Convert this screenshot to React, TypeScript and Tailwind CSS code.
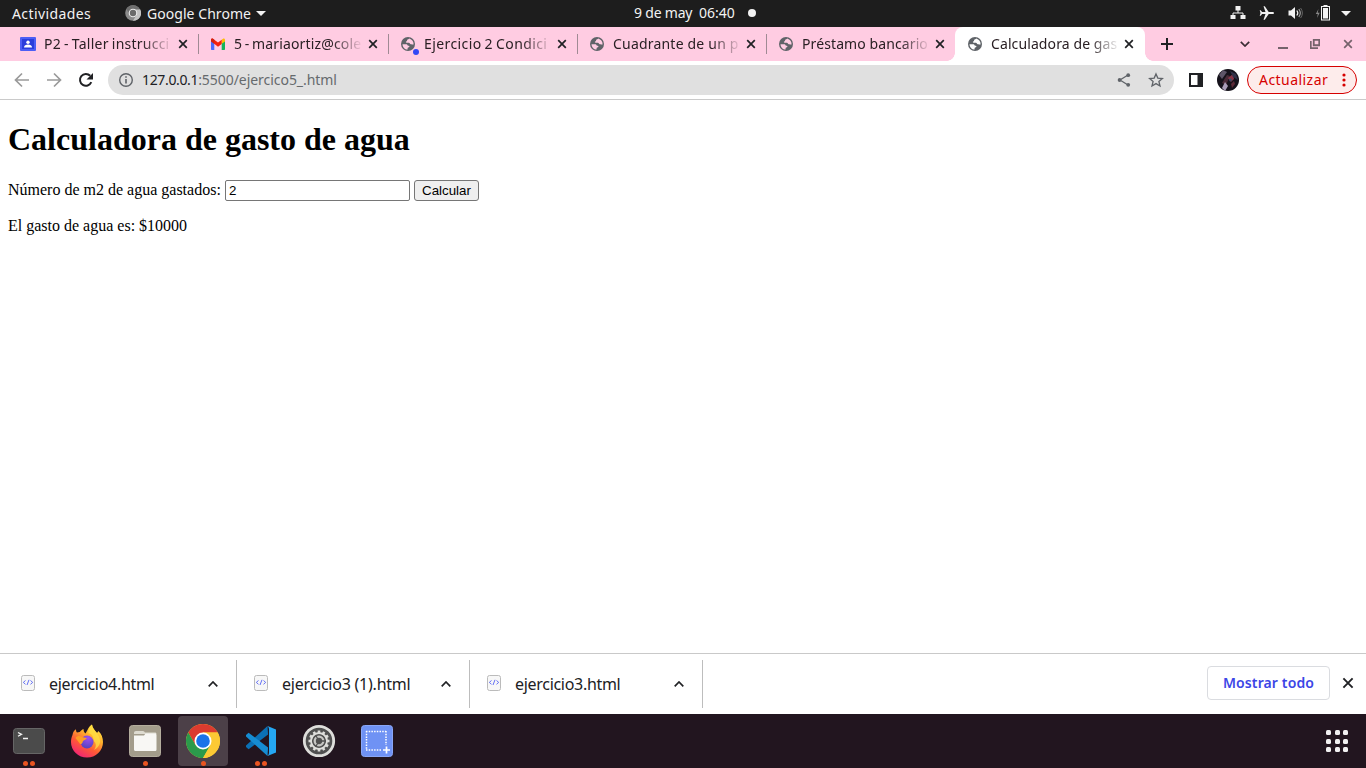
import type { ReactNode } from "react";

const UI = "font-['Noto_Sans','Open_Sans',sans-serif]";

function Cross({ color = "#202124" }: { color?: string }) {
  return (
    <svg className="h-[10px] w-[10px] shrink-0" viewBox="0 0 10 10">
      <path d="M1.200 1.200l7.600 7.600M8.800 1.200l-7.600 7.600" stroke={color} strokeWidth="1.700" />
    </svg>
  );
}

function Globe() {
  return (
    <svg className="h-4 w-4" viewBox="0 0 16 16">
      <circle cx="8" cy="8" r="7" fill="#5f6368" />
      <path
        d="M9.200 2.500c-.3 1-1.800.7-2 1.600-.2.800-.2 1.200-1 1.500-.6.300-.3 1.200.5 1.200h2.200c1 0 1 1.300 1.900 1.500.9.200 1.500.1 2.800.1.2-2.700-1.500-5-4.400-5.900z"
        fill="currentColor"
      />
      <path d="M2.500 8.200h3.300c1.300 0 2 .7 2 1.500h1.100c.7 0 .7 1.500-.1 1.600-1 .1-1.200.6-1.200 1.300v1c-2.800-.1-5-2.400-5.100-5.400z" fill="currentColor" />
    </svg>
  );
}

function Classroom() {
  return (
    <svg className="h-4 w-4" viewBox="0 0 16 16">
      <rect y="1" width="16" height="14" rx="1" fill="#4c5ef5" />
      <rect x="2" y="3" width="12" height="10" fill="#2b3edb" />
      <circle cx="8" cy="6.200" r="1.700" fill="#fff" />
      <path d="M4 11.500c0-2 2-2.900 4-2.900s4 .9 4 2.900z" fill="#fff" />
    </svg>
  );
}

function Gmail() {
  return (
    <svg className="h-4 w-4" viewBox="0 0 16 16">
      <path d="M1 4v9c0 .6.4 1 1 1h2.300V6.500z" fill="#4a6bfa" />
      <path d="M15 4v9c0 .6-.4 1-1 1h-2.300V6.500z" fill="#12b35a" />
      <path d="M11.700 3.700L13 2.700c1-.6 2 0 2 1.200v1.500l-3.300 2.400z" fill="#fbbc04" />
      <path d="M1 5.300V3.900c0-1.200 1-1.800 2-1.200l5 3.800 3.700-2.800v4.200L8 10.700z" fill="#f5200c" />
      <path d="M1 5.300V3.900c0-1.200 1-1.800 2-1.200l1.300 1v4.100z" fill="#d2200f" />
    </svg>
  );
}

type TabProps = { icon: ReactNode; width: string; text: string; title: string; active?: boolean; divider?: boolean; dot?: boolean };

function Tab({ icon, width, text, title, active, divider, dot }: TabProps) {
  return (
    <div className={`relative flex h-[34px] shrink-0 items-center pl-3 ${width} ${active ? "rounded-t-lg bg-white text-white" : "text-[#ffcce2]"}`}>
      <span className="relative">
        {icon}
        {dot && <span className="absolute top-[13px] left-[13px] h-1.5 w-1.5 rounded-full bg-[#3348f5]" />}
      </span>
      <span
        className={`ml-2 text-[14px] leading-5 whitespace-nowrap text-[#2a2024] [mask-image:linear-gradient(to_right,black_98px,transparent_129px)] ${text}`}
      >
        {title}
      </span>
      <span className="ml-[6px] flex">
        <Cross />
      </span>
      {divider && <span className="absolute top-[7px] -right-px h-5 w-px bg-[#a08a94]" />}
      {active && (
        <>
          <span className="absolute bottom-0 -left-2 h-2 w-2 bg-[radial-gradient(circle_at_0_0,#ffcce2_7.5px,#fff_8px)]" />
          <span className="absolute -right-2 bottom-0 h-2 w-2 bg-[radial-gradient(circle_at_100%_0,#ffcce2_7.5px,#fff_8px)]" />
        </>
      )}
    </div>
  );
}

function TopBar() {
  return (
    <header className="grid h-[27px] grid-cols-[634px_122px_1fr] items-center bg-[#1d1d1d] text-[14px] leading-[27px] text-[#f2f2f2]">
      <div className="flex items-center pl-3">
        <span className="w-[113px] tracking-[0.4px]">Actividades</span>
        <svg className="h-4 w-4 -translate-y-px" viewBox="0 0 16 16">
          <circle cx="8" cy="8" r="7.800" fill="#8b8b8b" />
          <path d="M8 4h7A7.800 7.800 0 0 1 8 15.800L11.500 10z" fill="#c4c4c4" />
          <path d="M1.300 4A7.800 7.800 0 0 1 15 4.500H8A4 4 0 0 0 4.500 9z" fill="#6f6f6f" />
          <circle cx="8" cy="8" r="4.300" fill="#eee" />
          <circle cx="8" cy="8" r="3.200" fill="#6b6b6b" />
        </svg>
        <span className="ml-[6px] tracking-[0.05px]">Google Chrome</span>
        <svg className="ml-[5px] h-[5px] w-[10px]" viewBox="0 0 10 5">
          <path d="M0 0h10L5 5z" fill="#f2f2f2" />
        </svg>
      </div>
      <div className="flex -translate-y-px items-center whitespace-nowrap">
        <span className="w-[65px] shrink-0 tracking-[-0.2px]">9 de may</span>
        <span className="w-[49px] shrink-0">06:40</span>
        <span className="h-2 w-2 shrink-0 rounded-full bg-[#f2f2f2]" />
      </div>
      <div className="flex -translate-y-px items-center justify-end pr-[15px]">
        <svg className="h-4 w-4" viewBox="0 0 16 16" fill="#f2f2f2">
          <path d="M5.500 1h5v4.500h-5zM.5 10h5v4h-5zM10.500 10h5v4h-5z" />
          <path d="M8 5v3M3 10.500V8h10v2.500" fill="none" stroke="#f2f2f2" />
        </svg>
        <svg className="ml-[13px] h-4 w-4" viewBox="0 0 16 16">
          <path d="M15 8c0-.7-.6-1.100-1.400-1.100H9.700L5.800 1.200H4.500l2 5.700H3.100L1.700 5.200H.7L1.500 8l-.8 2.800h1l1.400-1.700h3.400l-2 5.700h1.300l3.900-5.700h3.900C14.400 9.100 15 8.700 15 8z" fill="#f2f2f2" />
        </svg>
        <svg className="ml-[13px] h-4 w-4" viewBox="0 0 16 16">
          <path d="M.5 5.500h2.500L7 2v12L3 10.500H.5z" fill="#f2f2f2" />
          <path d="M8.800 5.500q2 2.500 0 5" fill="none" stroke="#f2f2f2" strokeWidth="1.200" />
          <path d="M10.800 4q3 4 0 8" fill="none" stroke="#aaa" strokeWidth="1.100" />
          <path d="M12.600 3q3.600 5 0 10" fill="none" stroke="#666" />
        </svg>
        <svg className="ml-[11px] h-4 w-4" viewBox="0 0 16 16">
          <path d="M3.500 4L.8 9h2l-.8 4 2.700-5.200h-2z" fill="#8a8a8a" />
          <path d="M8.500 0h4v1H15v14.500H6V1h2.500z" fill="#f2f2f2" />
          <path d="M7 2h7v12.500H7z" fill="#1d1d1d" />
          <path d="M8 3h5v10.500H8z" fill="#f2f2f2" />
        </svg>
        <svg className="ml-[10px] h-[5px] w-[10px] translate-y-px" viewBox="0 0 10 5">
          <path d="M0 0h10L5 5z" fill="#f2f2f2" />
        </svg>
      </div>
    </header>
  );
}

function TabStrip() {
  return (
    <div className="flex h-[34px] items-center bg-[#ffcce2] pl-2">
      <Tab icon={<Classroom />} width="w-[190px]" text="w-[128px] tracking-[0.24px] [word-spacing:-0.8px]" title="P2 - Taller instrucci" divider />
      <Tab icon={<Gmail />} width="w-[190px]" text="w-[128px] tracking-[0.15px] [word-spacing:-1.2px]" title="5 - mariaortiz@cole" divider />
      <Tab icon={<Globe />} width="w-[189px]" text="w-[127px] tracking-[0.4px] [word-spacing:-1px]" title="Ejercicio 2 Condici" divider dot />
      <Tab icon={<Globe />} width="w-[189px]" text="w-[127px] tracking-[0.2px]" title="Cuadrante de un p" divider />
      <Tab icon={<Globe />} width="w-[189px]" text="w-[127px] tracking-[0.1px]" title="Préstamo bancario" />
      <Tab icon={<Globe />} width="w-[190px]" text="w-[127px] tracking-[0.1px]" title="Calculadora de gas" active />
      <div className="flex flex-1 items-center pl-[16px]">
        <svg className="h-3 w-3" viewBox="0 0 12 12">
          <path d="M6 0v12M0 6h12" stroke="#202124" strokeWidth="2" />
        </svg>
        <svg className="ml-[67px] h-[6px] w-[10px]" viewBox="0 0 10 6">
          <path d="M.8.8L5 5 9.200.8" fill="none" stroke="#3a2c33" strokeWidth="1.700" />
        </svg>
        <svg className="ml-[28px] h-[10px] w-[10px]" viewBox="0 0 10 10">
          <path d="M0 9h10" stroke="#75626b" strokeWidth="2" />
        </svg>
        <svg className="ml-[22px] h-[10px] w-[10px]" viewBox="0 0 10 10" fill="none" stroke="#75626b">
          <path d="M3.750.75h5.500v5.500h-5.500z" strokeWidth="1.800" />
          <path d="M.75 2v7.250H8" strokeWidth="1.800" />
        </svg>
        <span className="ml-[23px] flex">
          <Cross color="#75626b" />
        </span>
      </div>
    </div>
  );
}

function Toolbar() {
  return (
    <div className="flex h-[39px] items-center border-b border-[#cacaca] bg-white pr-[9px] pl-[14px]">
      <svg className="h-4 w-4" viewBox="0 0 16 16" fill="none" stroke="#9a9a9a" strokeWidth="1.700">
        <path d="M15 8H2M8 1.500L1.500 8 8 14.500" />
      </svg>
      <svg className="ml-4 h-4 w-4" viewBox="0 0 16 16" fill="none" stroke="#9a9a9a" strokeWidth="1.700">
        <path d="M1 8h13M8 1.500L14.500 8 8 14.500" />
      </svg>
      <svg className="ml-4 h-4 w-4" viewBox="0 0 16 16">
        <path d="M13.300 10.200A5.900 5.900 0 1 1 12.200 3.800" fill="none" stroke="#202124" strokeWidth="2" />
        <path d="M15 1v6.500H8.500z" fill="#202124" />
      </svg>
      <div className="ml-[14px] flex h-[30px] flex-1 items-center rounded-full bg-[#e0e0e0] pl-[10px]">
        <svg className="h-4 w-4" viewBox="0 0 16 16">
          <circle cx="8" cy="8" r="6.300" fill="none" stroke="#5f6368" strokeWidth="1.400" />
          <path d="M8 7v4.500M8 4.300v1.500" stroke="#5f6368" strokeWidth="1.600" />
        </svg>
        <p className="ml-2 flex-1 text-[14px] leading-5 text-[#666a6d]">
          <span className="tracking-[-0.35px] text-[#202124]">127.0.0.1</span>
          <span className="tracking-[-0.05px]">:5500/ejercico5_.html</span>
        </p>
        <svg className="h-4 w-4" viewBox="0 0 16 16" fill="#5f6368">
          <path d="M12 3L4 8l8 5" fill="none" stroke="#5f6368" strokeWidth="1.300" />
          <circle cx="12.200" cy="3.200" r="1.900" />
          <circle cx="3.600" cy="8" r="1.900" />
          <circle cx="12.200" cy="12.800" r="1.900" />
        </svg>
        <svg className="mr-[10px] ml-4 h-4 w-4" viewBox="0 0 16 16">
          <path d="M8 1.900l1.800 4.200 4.600.4-3.500 3 1.100 4.500L8 11.600 4 14l1.100-4.500-3.500-3 4.600-.4z" fill="none" stroke="#5f6368" strokeWidth="1.300" />
        </svg>
      </div>
      <svg className="ml-[14px] h-4 w-4" viewBox="0 0 16 16">
        <path d="M1 1h14v14H1zM3 3v10h6.500V3z" fill="#202124" fillRule="evenodd" />
      </svg>
      <svg className="ml-[13px] h-[22px] w-[22px]" viewBox="0 0 22 22">
        <defs>
          <clipPath id="av">
            <circle cx="11" cy="11" r="11" />
          </clipPath>
          <filter id="avb">
            <feGaussianBlur stdDeviation=".6" />
          </filter>
        </defs>
        <g clipPath="url(#av)">
          <path d="M0 0h22v22H0z" fill="#15121b" />
          <g filter="url(#avb)">
            <path d="M2 6l4-5 4 2-5 7z" fill="#5d5468" />
            <path d="M5 14l5-8 3 1-4 9z" fill="#4a2a37" />
            <path d="M5 19l3-6 3 4-3 5z" fill="#a99cb8" />
            <path d="M11 9l5-4 1 5-3 3z" fill="#8a3546" />
            <path d="M13 2l6 3 2 6-5-3z" fill="#30304a" />
            <path d="M14 15l3-3 1 3-3 4z" fill="#5c2937" />
          </g>
          <circle cx="13.500" cy="11" r="1.400" fill="#3c4c65" />
        </g>
      </svg>
      <div className="ml-2 flex h-7 w-[110px] items-center rounded-full border border-[#d60000] bg-[#fdeceb] pl-[11px] text-[14px] leading-5 text-[#d60000]">
        <span className="w-[83px] tracking-[0.45px]">Actualizar</span>
        <svg className="h-[14px] w-1" viewBox="0 0 4 14" fill="#d60000">
          <circle cx="2" cy="2" r="1.600" />
          <circle cx="2" cy="7" r="1.600" />
          <circle cx="2" cy="12" r="1.600" />
        </svg>
      </div>
    </div>
  );
}

function Page() {
  return (
    <main className="flex-1 bg-white px-2 pt-[21px] font-['Liberation_Serif',serif] text-[16px] leading-[18px] text-black">
      <h1 className="text-[32px] leading-[37px] font-bold">Calculadora de gasto de agua</h1>
      <form className="mt-[22px] flex h-[21px] items-start" onSubmit={(e) => e.preventDefault()}>
        <label htmlFor="m2" className="w-[217px] pt-px whitespace-nowrap">
          Número de m2 de agua gastados:
        </label>
        <input
          id="m2"
          type="text"
          defaultValue="2"
          className="h-[21px] w-[185px] rounded-[2px] border border-[#767676] px-[3px] font-['Liberation_Sans',sans-serif] text-[13.333px] leading-[15px]"
        />
        <button className="ml-1 h-[21px] w-[65px] rounded-[3px] border border-[#767676] bg-[#efefef] text-center font-['Liberation_Sans',sans-serif] text-[13.333px] leading-[19px]">
          Calcular
        </button>
      </form>
      <p className="mt-4">El gasto de agua es: $10000</p>
    </main>
  );
}

function Download({ name, tracking }: { name: string; tracking: string }) {
  return (
    <div className="flex h-12 w-[233px] items-center border-r border-[#bdbdbd] pl-[17px] first:w-[237px] first:pl-[21px]">
      <svg className="h-4 w-[14px] shrink-0 -translate-y-px" viewBox="0 0 14 16">
        <rect x=".5" y=".5" width="13" height="15" rx="2" fill="#f7f7f7" stroke="#bbb" />
        <path d="M4.500 5.500L2.300 7.400l2.200 1.900M9.500 5.500l2.200 1.900-2.200 1.900M8 4.800L6 10" fill="none" stroke="#6470f5" />
      </svg>
      <span className={`ml-[14px] flex-1 text-[16px] leading-6 whitespace-nowrap text-[#202124] ${tracking}`}>{name}</span>
      <svg className="mr-[18px] h-[6px] w-[10px]" viewBox="0 0 10 6">
        <path d="M.7 5.300L5 1l4.300 4.300" fill="none" stroke="#202124" strokeWidth="1.700" />
      </svg>
    </div>
  );
}

function DownloadShelf() {
  return (
    <div className="flex h-[61px] items-center border-t border-[#c9c9c9] bg-white">
      <div className="flex flex-1">
        <Download name="ejercicio4.html" tracking="tracking-[-0.3px]" />
        <Download name="ejercicio3 (1).html" tracking="tracking-[-0.23px]" />
        <Download name="ejercicio3.html" tracking="tracking-[-0.3px]" />
      </div>
      <button className="mb-[2px] h-[34px] w-[123px] rounded border border-[#dadce0] pb-[2px] text-[14px] font-semibold tracking-[0.12px] text-[#3c46e6]">Mostrar todo</button>
      <svg className="mr-[12px] ml-[12px] h-3 w-3 -translate-y-px" viewBox="0 0 12 12">
        <path d="M1.400 1.400l9.200 9.200M10.600 1.400l-9.200 9.200" stroke="#202124" strokeWidth="1.900" />
      </svg>
    </div>
  );
}

function DockItem({ children, dots = 0, active }: { children: ReactNode; dots?: number; active?: boolean }) {
  return (
    <div className={`flex h-[50px] w-[50px] flex-col items-center rounded-[4px] ${active ? "bg-[#4c4048]" : ""}`}>
      <svg className="mt-[8px] h-[34px] w-[34px]" viewBox="0 0 34 34">
        {children}
      </svg>
      <div className="mt-[3px] flex gap-[2px]">
        {Array.from({ length: dots }, (_, i) => (
          <span key={i} className="h-[5px] w-[5px] rounded-full bg-[#e95420]" />
        ))}
      </div>
    </div>
  );
}

const GEAR_TEETH = Array.from({ length: 12 }, (_, i) => i * 30);

function Dock() {
  return (
    <footer className="flex h-[54px] items-center justify-between bg-[#22151f] pr-[18px] pl-1">
      <div className="flex gap-2">
        <DockItem dots={2}>
          <rect x="1.500" y="4.500" width="31" height="25" rx="3" fill="#4b4b4b" stroke="#666" />
          <path d="M6 8.500l3.500 1.800L6 12.200M11 14.500h5" fill="none" stroke="#f4f4f4" strokeWidth="1.300" />
        </DockItem>
        <DockItem>
          <defs>
            <linearGradient id="ff" x1=".85" y1="0" x2=".25" y2="1">
              <stop offset="0" stopColor="#fff04a" />
              <stop offset=".35" stopColor="#ffb22c" />
              <stop offset=".65" stopColor="#ff5a35" />
              <stop offset="1" stopColor="#f0207a" />
            </linearGradient>
            <radialGradient id="ffp" cx=".6" cy=".2" r=".9">
              <stop offset="0" stopColor="#a04ff0" />
              <stop offset="1" stopColor="#4a42b8" />
            </radialGradient>
          </defs>
          <path d="M2.500 11C3 8 4 6.500 6 5.200c0 1.500.3 2.500 1 3.300.8-.4 1.700-.6 2.700-.6C11.500 6 13 5 13.500 5c0 1.500.5 3.500 2 4.500l2-3.500c1-2.500 2.500-4.500 4.500-5.500.3 3.500 2.500 5.200 5 8.200 1.200-.5 1-.9.900-1.900C31.500 9.500 33 14 33 18a16 15.500 0 0 1-32 0c0-2.500.4-4.800 1.500-7z" fill="url(#ff)" />
          <path d="M22 .5c-2.500 2.500-4 5-3.500 8.500 3 .8 5.500 4 5 8 3 2 3 6 .5 9 4.500-2.500 6.500-6 6-10C29.500 10 23 7 22 .5z" fill="#ffe044" opacity=".75" />
          <circle cx="17" cy="18" r="6.500" fill="url(#ffp)" />
          <path d="M5.500 14c2-2.500 4-2.300 6-1.200 1.800.9 3.500.8 5.200 1.300-.2 2-3.700 2-4 3.800-.4 2.300-2.500 2-2.500 2z" fill="#ff9d24" />
        </DockItem>
        <DockItem dots={1}>
          <rect x="1.500" y="1.500" width="31" height="31" rx="3" fill="#a39c8b" stroke="#b4ad9d" />
          <path d="M6 10V9c0-1.200.7-2 2-2h7c1 0 1.500 1 2 1.500H27c1 0 1.500.7 1.500 1.500z" fill="#dedbd0" />
          <path d="M6 11.500h10l1.500-2H27c1 0 1.500.6 1.500 1.500v14.500c0 1-.7 1.500-1.500 1.500H7.500c-1 0-1.500-.6-1.500-1.500z" fill="#f8f7f4" />
        </DockItem>
        <DockItem dots={1} active>
          <circle cx="17" cy="17" r="17" fill="#fcc934" />
          <path d="M2.280 8.500A17 17 0 0 1 31.720 8.500L17 8.500 9.640 21.250z" fill="#db3b2f" />
          <path d="M2.280 8.500A17 17 0 0 0 17 34L24.360 21.250H9.640z" fill="#2b9a4b" />
          <path d="M31.720 8.500H17L24.360 21.250 17 34A17 17 0 0 0 31.720 8.500z" fill="#fcc934" />
          <circle cx="17" cy="17" r="8.500" fill="#fff" />
          <circle cx="17" cy="17" r="6.800" fill="#1a73e8" />
        </DockItem>
        <DockItem dots={2}>
          <path d="M24 10.500L4.600 25.300 2 23v-1.500L23.500 2z" fill="#0b70b5" />
          <path d="M24 23.500L4.600 8.700 2 11v1.500L23.500 32z" fill="#168cd2" />
          <path d="M23.500 2L32 5.500v23L23.500 32C24.500 31 25 30 25 29V5c0-1-.5-2-1.500-3z" fill="#25a7f2" />
        </DockItem>
        <DockItem>
          <circle cx="17" cy="17" r="14.700" fill="#505050" stroke="#dededb" strokeWidth="2.800" />
          {GEAR_TEETH.map((a) => (
            <rect key={a} x="15.700" y="6.500" width="2.600" height="3.500" fill="#dededb" transform={`rotate(${a} 17 17)`} />
          ))}
          <circle cx="17" cy="17" r="8" fill="none" stroke="#dededb" strokeWidth="1.800" />
          <circle cx="17" cy="17" r="4.300" fill="none" stroke="#c6c6c3" strokeWidth="2.300" />
          <path d="M17 17h7M17 17l-3.500-6M17 17l-3.500 6" stroke="#505050" strokeWidth="1.300" />
        </DockItem>
        <DockItem>
          <rect x="1.500" y="1.500" width="31" height="31" rx="3" fill="#6f92f4" stroke="#89a6f7" />
          <path d="M6 7.500h20M6 26h16M6.500 7v19M26 7v14" fill="none" stroke="#fff" strokeWidth="1.500" strokeDasharray="1.500 1.200" />
          <path d="M26.500 22.500v7M23 26h7" stroke="#fff" strokeWidth="1.700" />
        </DockItem>
      </div>
      <div className="grid grid-cols-3 gap-[3.5px]">
        {Array.from({ length: 9 }, (_, i) => (
          <span key={i} className="h-[5px] w-[5px] rounded-[1.5px] bg-[#f2f0f1]" />
        ))}
      </div>
    </footer>
  );
}

export default function App() {
  return (
    <div className={`flex h-[768px] w-[1366px] flex-col overflow-hidden bg-white ${UI}`}>
      <TopBar />
      <TabStrip />
      <Toolbar />
      <Page />
      <DownloadShelf />
      <Dock />
    </div>
  );
}
